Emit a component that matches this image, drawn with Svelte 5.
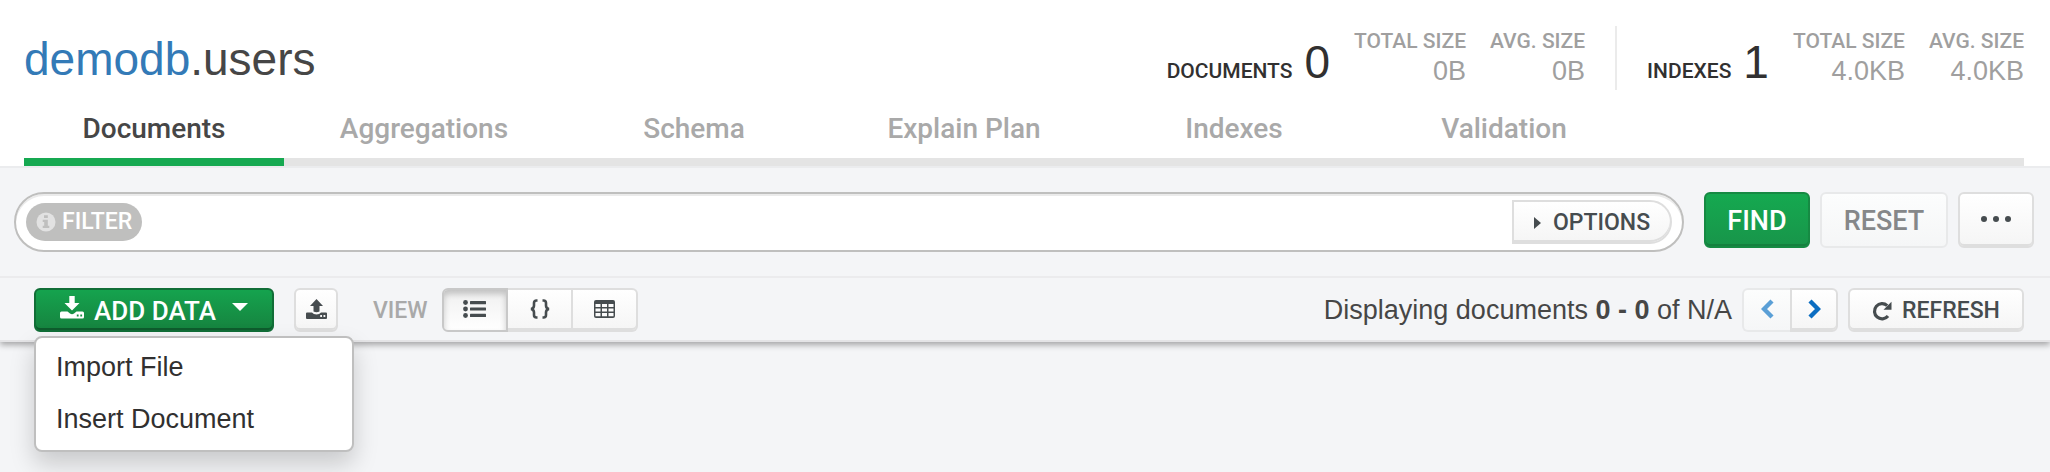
<script>
  let activeTab = $state('Documents');
  let view = $state('list');
  let menuOpen = $state(true);
  let filter = $state('');

  const tabs = ['Documents', 'Aggregations', 'Schema', 'Explain Plan', 'Indexes', 'Validation'];
  const stats = [
    { label: 'Documents', count: 0, total: '0B', avg: '0B' },
    { label: 'Indexes', count: 1, total: '4.0KB', avg: '4.0KB' }
  ];
</script>

<div class="page">
  <header>
    <div class="top">
      <h1><a href="#demodb">demodb</a>.users</h1>
      <div class="stats">
        {#each stats as s}
          <section class="stat">
            <div class="primary"><span class="label">{s.label}</span><span class="count">{s.count}</span></div>
            <dl><dt>Total size</dt><dd>{s.total}</dd></dl>
            <dl><dt>Avg. size</dt><dd>{s.avg}</dd></dl>
          </section>
        {/each}
      </div>
    </div>
    <nav class="tabs">
      {#each tabs as tab}
        <button class="tab" class:active={tab === activeTab} onclick={() => (activeTab = tab)}>{tab}</button>
      {/each}
    </nav>
  </header>

  <form class="query" onsubmit={(e) => e.preventDefault()}>
    <div class="field">
      <label class="pill" for="filter">
        <svg width="20" height="20" viewBox="0 0 20 20" aria-hidden="true">
          <circle cx="10" cy="10" r="9.5" fill="#e2e2e2" />
          <path d="M8 3.2h3.8v2.9H8zM6.7 7.8h5.1v6h1.5V16H6.7v-2.2h1.5V10H6.7z" fill="#bfbfbe" />
        </svg>
        Filter
      </label>
      <input id="filter" type="text" bind:value={filter} autocomplete="off" />
      <button type="button" class="btn options">
        <svg width="7" height="12" viewBox="0 0 7 12" aria-hidden="true"><path d="M0 0l7 6-7 6z" fill="#464c4f" /></svg>
        Options
      </button>
    </div>
    <button class="btn primary-btn find">Find</button>
    <button type="button" class="btn faded reset">Reset</button>
    <button type="button" class="btn more" aria-label="More">
      <svg width="30" height="6" viewBox="0 0 30 6" fill="#464c4f" aria-hidden="true"><circle cx="3" cy="3" r="3" /><circle cx="15" cy="3" r="3" /><circle cx="27" cy="3" r="3" /></svg>
    </button>
  </form>

  <div class="toolbar">
    <div class="dropdown">
      <button class="btn primary-btn add" aria-expanded={menuOpen} onclick={() => (menuOpen = !menuOpen)}>
        <svg class="disk" width="24" height="23" viewBox="0 0 24 23" fill="#fff" aria-hidden="true">
          <path d="M9.300 0h5.400v7h4.800L12 14.500 4.500 7h4.800z" />
          <path fill-rule="evenodd" d="M1.500 15.500h6l2.500 2q2 1.500 4 0l2.500-2h6q1.500 0 1.500 1.500v4q0 1.500-1.500 1.500h-21Q0 22.500 0 21v-4q0-1.500 1.500-1.500zM16.800 18.500v2h1.800v-2zM20.300 18.500v2h1.800v-2z" />
        </svg>
        <span>Add data</span>
        <svg class="caret" width="16" height="8" viewBox="0 0 16 8" aria-hidden="true"><path d="M0 0h16L8 8z" fill="#fff" /></svg>
      </button>
      {#if menuOpen}
        <ul class="menu">
          <li><button>Import File</button></li>
          <li><button>Insert Document</button></li>
        </ul>
      {/if}
    </div>
    <button class="btn export" aria-label="Export collection">
      <svg width="21" height="20" viewBox="0 0 21 20" fill="#464c4f" aria-hidden="true">
        <path d="M10.500 0l6.500 7h-3.500v5.500q-3 1.500-6 0V7H4z" />
        <path fill-rule="evenodd" d="M1 13.500h5q1.500 2 4.500 2t4.500-2h5q1 0 1 1V19q0 1-1 1H1q-1 0-1-1v-4.500q0-1 1-1zM14.200 16v2H16v-2zM17.500 16v2h1.800v-2z" />
      </svg>
    </button>
    <span class="view-label" id="view-label">View</span>
    <div class="segments" role="group" aria-labelledby="view-label">
      <button class="btn seg" class:pressed={view === 'list'} aria-label="List" onclick={() => (view = 'list')}>
        <svg width="23" height="18" viewBox="0 0 23 18" fill="#464c4f" aria-hidden="true">
          <circle cx="2.500" cy="2.500" r="2.400" /><circle cx="2.500" cy="9" r="2.400" /><circle cx="2.500" cy="15.500" r="2.400" />
          <rect x="7" y="1" width="16" height="3.200" rx=".5" /><rect x="7" y="7.400" width="16" height="3.200" rx=".5" /><rect x="7" y="13.800" width="16" height="3.200" rx=".5" />
        </svg>
      </button>
      <button class="btn seg" class:pressed={view === 'json'} aria-label="JSON" onclick={() => (view = 'json')}>
        <svg width="20" height="20" viewBox="0 0 20 20" fill="none" stroke="#464c4f" stroke-width="2.600" aria-hidden="true">
          <path d="M7.500 1.500H6.500Q4 1.500 4 4v2.500Q4 9.500 1 10q3 .5 3 3.500V16q0 2.500 2.500 2.500h1M12.500 1.500h1Q16 1.500 16 4v2.500q0 3 3 3.500-3 .5-3 3.500V16q0 2.500-2.500 2.500h-1" />
        </svg>
      </button>
      <button class="btn seg" class:pressed={view === 'table'} aria-label="Table" onclick={() => (view = 'table')}>
        <svg width="21" height="18" viewBox="0 0 21 18" aria-hidden="true">
          <rect width="21" height="18" rx="2" fill="#464c4f" />
          <path d="M1.500 4h5v3h-5zM8 4h5v3H8zM14.500 4h5v3h-5zM1.500 8.400h5v3.200h-5zM8 8.400h5v3.200H8zM14.500 8.400h5v3.200h-5zM1.500 13h5v3.300h-5zM8 13h5v3.300H8zM14.500 13h5v3.300h-5z" fill="#fbfbfb" />
        </svg>
      </button>
    </div>
    <p class="range">Displaying documents <b>0 - 0</b> of N/A</p>
    <div class="pager">
      <button class="btn faded page-btn" aria-label="Previous page">
        <svg width="13" height="20" viewBox="0 0 13 20" fill="none" stroke="#5a9fd6" stroke-width="4.400" aria-hidden="true"><path d="M11 2L3 10l8 8" /></svg>
      </button>
      <button class="btn page-btn" aria-label="Next page">
        <svg width="13" height="20" viewBox="0 0 13 20" fill="none" stroke="#0b6dc1" stroke-width="4.400" aria-hidden="true"><path d="M2 2l8 8-8 8" /></svg>
      </button>
    </div>
    <button class="btn refresh">
      <svg width="20" height="20" viewBox="0 0 20 20" aria-hidden="true">
        <path d="M15.200 4.600A7.600 7.600 0 1 0 16 15" fill="none" stroke="#464c4f" stroke-width="3.200" />
        <path d="M19.500.8v8h-8z" fill="#464c4f" />
      </svg>
      Refresh
    </button>
  </div>
</div>

<style>
  :global(body) {
    margin: 0;
    background: #f4f5f7;
  }
  .page {
    min-height: 100vh;
    overflow-x: clip;
    font-family: 'Liberation Sans', Arial, sans-serif;
    font-size: 27px;
    line-height: 32px;
    color: #464646;
  }
  button,
  input {
    font: inherit;
    color: inherit;
    margin: 0;
    padding: 0;
    border: 0;
    background: none;
    box-sizing: border-box;
  }
  button {
    cursor: pointer;
  }
  svg {
    display: block;
    flex: none;
  }
  header {
    background: #fff;
    padding: 26px 26px 0 24px;
    border-bottom: 2px solid #ebecee;
  }
  .top {
    display: flex;
    justify-content: space-between;
    height: 64px;
  }
  h1 {
    margin: 0;
    padding-top: 6px;
    font-size: 46px;
    line-height: 54px;
    font-weight: 400;
  }
  h1 a {
    color: #337ab7;
    text-decoration: none;
  }
  .stats {
    display: flex;
    text-transform: uppercase;
  }
  .stat {
    display: flex;
    gap: 24px;
  }
  .stat + .stat {
    margin-left: 30px;
    padding-left: 30px;
    border-left: 2px solid #ebebeb;
  }
  .primary {
    display: flex;
    align-items: baseline;
    gap: 12px;
    color: #313030;
    padding-top: 10px;
  }
  .label {
    font: 500 21px Roboto, sans-serif;
  }
  .count {
    font-size: 46px;
    line-height: 52px;
  }
  dl {
    margin: 0;
    padding-top: 3px;
    color: #a09f9f;
    text-align: right;
  }
  dt {
    font: 500 21px/24px Roboto, sans-serif;
  }
  dd {
    margin: 0;
    font-size: 27px;
    line-height: 36px;
  }
  .tabs {
    display: flex;
    gap: 10px;
    margin-top: 10px;
    box-shadow: inset 0 -8px #e4e4e4;
  }
  .tab {
    width: 260px;
    padding: 13px 0;
    border-bottom: 8px solid transparent;
    font: 500 28px/32px Roboto, sans-serif;
    color: #a9a9a9;
  }
  .tab.active {
    color: #464646;
    border-color: #16a951;
  }
  .query {
    display: flex;
    gap: 10px;
    padding: 24px 16px 24px 14px;
    border-bottom: 2px solid #ebebed;
  }
  .field {
    flex: 1;
    display: flex;
    align-items: center;
    height: 60px;
    margin-right: 10px;
    padding: 0 10px;
    box-sizing: border-box;
    border: 2px solid #bfbfbe;
    border-radius: 30px;
    background: #fff;
    box-shadow: inset 0 2px #ebebeb;
  }
  .pill {
    display: flex;
    align-items: center;
    gap: 6px;
    padding: 0 10px;
    border-radius: 19px;
    background: #bfbfbe;
    color: #fff;
    font: 500 23px/38px Roboto, sans-serif;
    text-transform: uppercase;
  }
  .field input {
    flex: 1;
    min-width: 0;
    height: 44px;
    padding: 0 12px;
    outline: none;
  }
  .btn {
    display: flex;
    align-items: center;
    justify-content: center;
    height: 44px;
    padding-top: 2px;
    border: 2px solid #dedede;
    border-radius: 6px;
    background: linear-gradient(#fff, #f5f5f5);
    box-shadow: inset 0 -2px #dedede;
    color: #464c4f;
    font: 500 23px/28px Roboto, sans-serif;
    text-transform: uppercase;
  }
  .options {
    width: 160px;
    gap: 12px;
    border-radius: 0 22px 22px 0;
  }
  .query > .btn {
    height: 56px;
    font-size: 27px;
  }
  .primary-btn {
    border-color: #168a43;
    background: linear-gradient(#15a950, #18954a);
    box-shadow: inset 0 -2px #15803f;
    color: #fff;
  }
  .find {
    width: 106px;
  }
  .faded {
    border-color: #e8e9ea;
    background: linear-gradient(#fcfdfd, #f5f6f7);
    box-shadow: none;
    color: #858789;
  }
  .reset {
    width: 128px;
  }
  .query .more {
    width: 76px;
    padding: 0 0 2px;
  }
  .toolbar {
    display: flex;
    align-items: center;
    padding: 10px 26px 8px 34px;
    border-bottom: 2px solid #e4e4e6;
    box-shadow: 0 3px 6px rgba(0, 0, 0, 0.32);
    clip-path: inset(0 0 -300px 0);
  }
  .dropdown {
    position: relative;
  }
  .add {
    width: 240px;
    border-color: #116e37;
    background: linear-gradient(#15a34e, #16833f);
    box-shadow: inset 0 -2px #0e5c2d;
    font-size: 26px;
  }
  .disk {
    margin: 0 10px 8px 0;
  }
  .caret {
    margin: 0 0 8px 16px;
  }
  .menu {
    position: absolute;
    z-index: 1;
    top: 48px;
    left: 0;
    width: 320px;
    box-sizing: border-box;
    margin: 0;
    padding: 4px 0;
    list-style: none;
    border: 2px solid #bfbfbf;
    border-radius: 8px;
    background: #fff;
    box-shadow: 0 12px 24px rgba(0, 0, 0, 0.18);
  }
  .menu button {
    width: 100%;
    padding: 9px 20px 11px;
    text-align: left;
    color: #313030;
  }
  .export,
  .seg,
  .page-btn {
    padding: 0 0 2px;
  }
  .export {
    width: 44px;
    margin-left: 20px;
  }
  .view-label {
    margin: 0 14px 0 35px;
    padding-top: 2px;
    font: 500 23px/28px Roboto, sans-serif;
    text-transform: uppercase;
    color: #a9a9a9;
  }
  .segments,
  .pager {
    display: flex;
  }
  .segments {
    width: 196px;
  }
  .seg {
    flex: 1;
    border-radius: 0;
  }
  .seg + .seg {
    border-left-width: 0;
  }
  .seg:first-child,
  .page-btn:first-child {
    border-radius: 6px 0 0 6px;
  }
  .seg:last-child,
  .page-btn:last-child {
    border-radius: 0 6px 6px 0;
  }
  .seg.pressed {
    border-color: #c8c8c8;
    background: linear-gradient(#f0f0f0, #fff);
    box-shadow: inset 0 4px 6px rgba(0, 0, 0, 0.2);
  }
  .range {
    margin: 0 10px 0 auto;
  }
  .pager {
    margin-right: 10px;
  }
  .page-btn {
    width: 48px;
  }
  .page-btn:first-child {
    border-right-width: 0;
  }
  .refresh {
    width: 176px;
    gap: 10px;
  }
</style>
